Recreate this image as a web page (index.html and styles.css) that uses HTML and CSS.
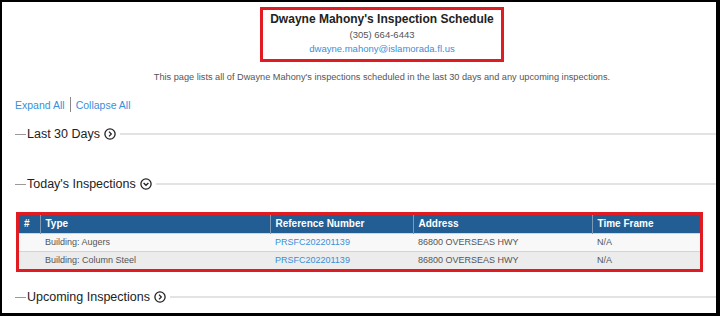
FILE: index.html
```html
<!DOCTYPE html>
<html lang="en">
<head>
    <meta charset="UTF-8">
    <title>Inspection Schedule</title>
    <link rel="stylesheet" href="styles.css">
</head>
<body>
    <div class="frame">
        <!-- Inspector info -->
        <div class="top">
            <div class="info-box">
                <h1>Dwayne Mahony's Inspection Schedule</h1>
                <div class="phone">(305) 664-6443</div>
                <a class="email" href="#">dwayne.mahony@islamorada.fl.us</a>
            </div>
            <p class="intro">This page lists all of Dwayne Mahony's inspections scheduled in the last 30 days and any upcoming inspections.</p>
        </div>

        <div class="toggles">
            <a href="#">Expand All</a><span class="sep"></span><a href="#">Collapse All</a>
        </div>

        <!-- Last 30 Days -->
        <div class="section-head s-last">
            <span class="rule-short"></span>
            <span class="title">Last 30 Days</span>
            <svg class="icon" viewBox="0 0 12 12"><circle cx="6" cy="6" r="5.1"/><path d="M5 3.6 7.3 6 5 8.4"/></svg>
            <span class="rule"></span>
        </div>

        <!-- Today's Inspections -->
        <div class="section-head s-today">
            <span class="rule-short"></span>
            <span class="title">Today's Inspections</span>
            <svg class="icon" viewBox="0 0 12 12"><circle cx="6" cy="6" r="5.1"/><path d="M3.6 5 6 7.3 8.4 5"/></svg>
            <span class="rule"></span>
        </div>

        <div class="table-wrap">
            <table>
                <thead>
                    <tr>
                        <th class="c-num">#</th>
                        <th class="c-type">Type</th>
                        <th class="c-ref">Reference Number</th>
                        <th class="c-addr">Address</th>
                        <th>Time Frame</th>
                    </tr>
                </thead>
                <tbody>
                    <tr>
                        <td></td>
                        <td>Building: Augers</td>
                        <td><a href="#">PRSFC202201139</a></td>
                        <td>86800 OVERSEAS HWY</td>
                        <td>N/A</td>
                    </tr>
                    <tr>
                        <td></td>
                        <td>Building: Column Steel</td>
                        <td><a href="#">PRSFC202201139</a></td>
                        <td>86800 OVERSEAS HWY</td>
                        <td>N/A</td>
                    </tr>
                </tbody>
            </table>
        </div>

        <!-- Upcoming Inspections -->
        <div class="section-head s-upcoming">
            <span class="rule-short"></span>
            <span class="title">Upcoming Inspections</span>
            <svg class="icon" viewBox="0 0 12 12"><circle cx="6" cy="6" r="5.1"/><path d="M5 3.6 7.3 6 5 8.4"/></svg>
            <span class="rule"></span>
        </div>
    </div>
</body>
</html>
```

FILE: styles.css
```css
/* Base */
* {
    margin: 0;
    padding: 0;
    box-sizing: border-box;
}
body {
    font-family: "Liberation Sans", Arial, sans-serif;
    background-color: #000;
}
.frame {
    width: 720px;
    height: 316px;
    overflow: hidden;
    background-color: #fff;
    border-style: solid;
    border-color: #000;
    border-width: 2px 4px 3px 2px;
}
a {
    color: #3a8fd9;
    text-decoration: none;
}
/* Inspector info */
.top {
    padding-left: 46px;
    text-align: center;
}
.info-box {
    display: inline-block;
    width: 244px;
    margin-top: 5px;
    padding: 0 0 3px;
    border: 3px solid #e11b22;
}
.info-box h1 {
    font-size: 12px;
    line-height: 18px;
    color: #222;
}
.phone {
    font-size: 9.5px;
    line-height: 14px;
    color: #555;
}
.email {
    display: block;
    font-size: 9.5px;
    line-height: 14px;
}
.intro {
    margin-top: 8px;
    font-size: 9.2px;
    line-height: 14px;
    color: #555;
}
/* Expand / collapse */
.toggles {
    display: flex;
    align-items: center;
    margin-top: 13px;
    padding-left: 13px;
    font-size: 10.5px;
    line-height: 14px;
}
.sep {
    display: inline-block;
    width: 1px;
    height: 15px;
    margin: 0 5px;
    background-color: #888;
}
/* Section headings */
.section-head {
    display: flex;
    align-items: center;
    padding-left: 13px;
    height: 16px;
}
.s-last { margin-top: 14px; }
.s-today { margin-top: 34px; }
.s-upcoming { margin-top: 17px; }
.rule-short {
    width: 11px;
    height: 1px;
    background-color: #999;
}
.title {
    margin-left: 1px;
    font-size: 12.5px;
    color: #222;
}
.icon {
    width: 12px;
    height: 12px;
    margin-left: 4px;
    fill: none;
    stroke: #222;
    stroke-width: 1.3;
}
.rule {
    flex: 1;
    height: 2px;
    margin-left: 4px;
    background-color: #e3e3e3;
}
/* Table */
.table-wrap {
    margin: 20px 13px 0 14px;
    border: 3px solid #e11b22;
}
table {
    width: 100%;
    border-collapse: collapse;
    font-size: 9px;
}
th {
    height: 18px;
    padding: 0 5px;
    text-align: left;
    font-size: 10px;
    color: #fff;
    background-color: #225e94;
    border-left: 1px solid #7c9ab8;
}
th:first-child {
    border-left: none;
}
td {
    height: 18px;
    padding: 0 5px;
    color: #555;
    border-top: 1px solid #d4d4d4;
}
tbody tr:nth-child(1) td { background-color: #f8f8f8; }
tbody tr:nth-child(2) td { background-color: #ececec; }
.c-num { width: 21px; }
.c-type { width: 230px; }
.c-ref { width: 143px; }
.c-addr { width: 179px; }
```
